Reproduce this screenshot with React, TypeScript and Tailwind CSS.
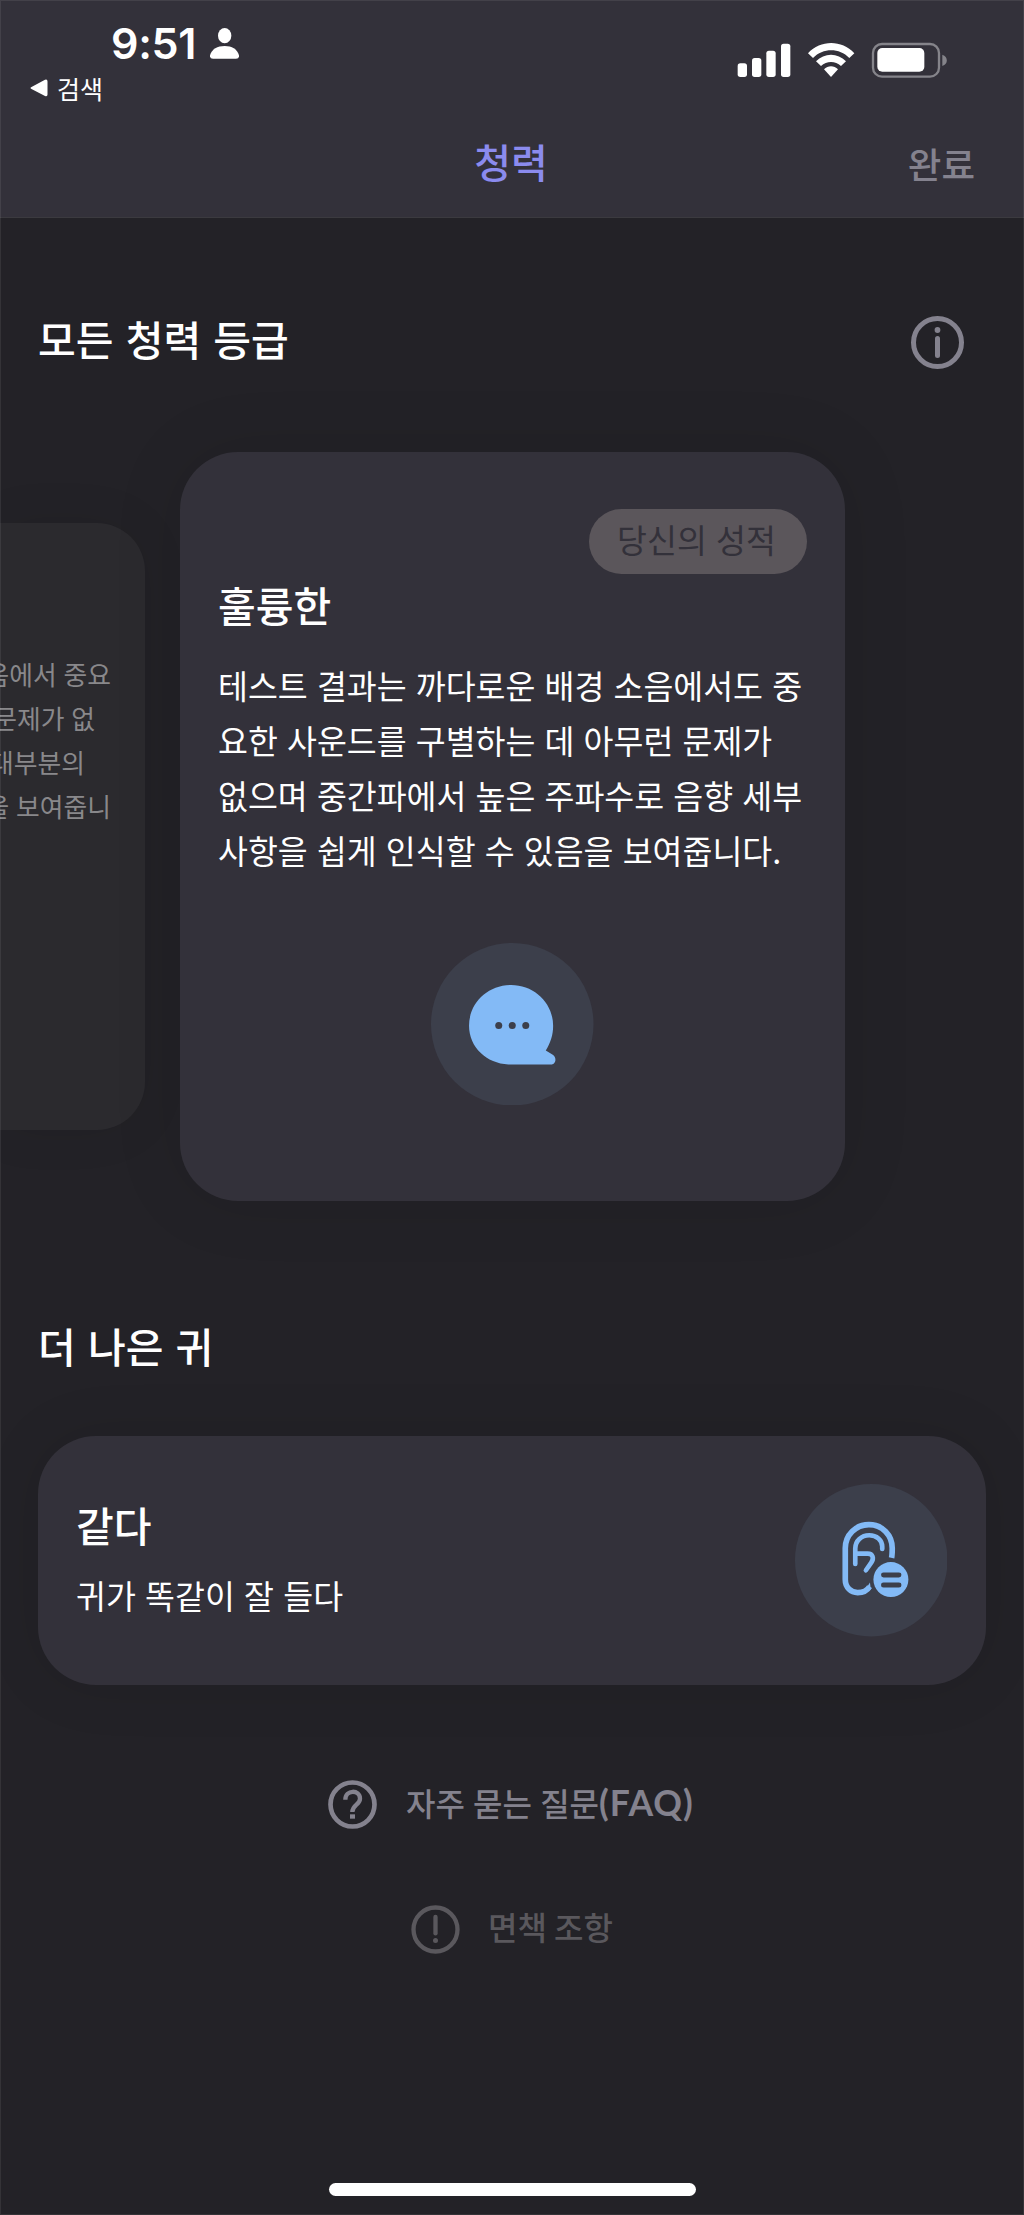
import React from "react";

function StatusIcons() {
  return (
    <svg className="h-[36px] w-[212px]" viewBox="674 126 636 108" fill="#fff">
      <rect x="676" y="190" width="28" height="41" rx="8" />
      <rect x="719" y="174" width="28" height="57" rx="8" />
      <rect x="762" y="152" width="28" height="79" rx="8" />
      <rect x="806" y="131" width="28" height="100" rx="8" />
      <path d="M887 160 C925 119 988 119 1026 160 L1011 174 C981 143 932 143 902 174 Z" />
      <path d="M911 184 C936 158 976 158 1001 184 L986 198 C969 182 943 182 926 198 Z" />
      <path d="M935 208 C947 196 965 196 977 208 L956 231 Z" />
      <rect x="1082" y="132" width="198" height="98" rx="27" fill="none" stroke="#85848a" strokeWidth="7" />
      <rect x="1095" y="144" width="141" height="71" rx="15" />
      <path d="M1290 164 C1308 170 1308 192 1290 198 Z" fill="#85848a" />
    </svg>
  );
}

function ChatIcon() {
  return (
    <svg className="size-[162.5px] shrink-0" viewBox="93 127 487 487">
      <circle cx="336.5" cy="370.5" r="243.5" fill="#3c3f4b" />
      <path
        d="M333 253 C403 253 459 307 459 375 C459 403 451 427 437 449 L458 462 C471 471 467 491 453 491 H325 C260 488 207 440 207 375 C207 308 262 253 333 253Z"
        fill="#83baf6"
      />
      <g fill="#3c3f4b">
        <circle cx="296" cy="374" r="10.5" />
        <circle cx="336.500" cy="374" r="10.5" />
        <circle cx="377" cy="374" r="10.5" />
      </g>
    </svg>
  );
}

function EarIcon() {
  return (
    <svg className="size-[152.5px] shrink-0" viewBox="44 42 458 458" fill="none">
      <circle cx="273" cy="271" r="229" fill="#3c3f4b" />
      <g stroke="#83baf6">
        <path
          d="M334 264 C336 255 336 245 336 235 C336 195 306 164 266 164 C226 164 195 195 195 235 V329 C195 353 212 368 232 368 C248 368 261 362 268 350"
          strokeWidth="17"
        />
        <path
          d="M306 237 V230 C306 210 289 196 267 196 C244 196 225 212 225 236 V282 M225 251 H262 C278 251 282 265 273 278 L257 301"
          strokeWidth="14"
          strokeLinecap="round"
          strokeLinejoin="round"
        />
      </g>
      <path d="M269 338 L272 360 L260 352 Z" fill="#83baf6" />
      <circle cx="332" cy="329" r="52.500" fill="#83baf6" />
      <path d="M310 315 H356 M310 345 H356" stroke="#3c3f4b" strokeWidth="15" strokeLinecap="round" />
    </svg>
  );
}

function InfoIcon() {
  return (
    <svg className="size-[53px]" viewBox="0 0 53 53" fill="#84828e">
      <circle cx="26.500" cy="26.500" r="24" fill="none" stroke="#84828e" strokeWidth="5" />
      <circle cx="26.500" cy="14" r="2.900" />
      <rect x="24" y="20" width="5" height="22" rx="2.500" />
    </svg>
  );
}

function QuestionIcon() {
  return (
    <svg className="size-[49px]" viewBox="84 90 147 147" fill="none" stroke="#84828e">
      <circle cx="157.500" cy="163.500" r="66" strokeWidth="14" />
      <path d="M136 149 C136 118 180 118 180 146 C180 164 157 164 157 186" strokeWidth="13" />
      <rect x="150" y="193" width="15" height="13" fill="#84828e" stroke="none" />
    </svg>
  );
}

function AlertIcon() {
  return (
    <svg className="size-[49px]" viewBox="333 463 147 147" fill="none" stroke="#5a585d">
      <circle cx="406.500" cy="536.500" r="66" strokeWidth="13" />
      <path d="M406.500 499 V548" strokeWidth="13" strokeLinecap="round" />
      <circle cx="406.500" cy="569.500" r="7.500" fill="#5a585d" stroke="none" />
    </svg>
  );
}

const resultLines = [
  "테스트 결과는 까다로운 배경 소음에서도 중",
  "요한 사운드를 구별하는 데 아무런 문제가",
  "없으며 중간파에서 높은 주파수로 음향 세부",
  "사항을 쉽게 인식할 수 있음을 보여줍니다.",
];

export default function App() {
  return (
    <div className="relative flex h-[2215px] w-[1024px] flex-col overflow-hidden bg-[#232227] font-['Noto_Sans_CJK_KR',sans-serif] text-white">
      <header className="h-[218px] shrink-0 border-b border-[#3b3a3f] bg-[#33313a]">
        <div className="flex h-[114px] items-start justify-between pr-[75px] pl-[30px]">
          <div>
            <div className="flex h-[66px] items-start gap-[14px] pt-[18px] pl-[81px]">
              <span className="w-[85px] font-['Inter',sans-serif] text-[43px] leading-[50px] font-semibold tracking-[-0.3px] whitespace-nowrap">9:51</span>
              <svg className="mt-[10px] h-[31px] w-[29px]" viewBox="630 83 87 93" fill="#fff">
                <ellipse cx="674" cy="106" rx="20" ry="23" />
                <path d="M630 165 C636 146 652 137 674 137 C696 137 711 146 717 165 Q718 175 708 175 H639 Q629 175 630 165 Z" />
              </svg>
            </div>
            <div className="flex h-[44px] items-center gap-[9px]">
              <svg className="h-[18px] w-[18px]" viewBox="0 0 18 18" fill="#fff">
                <path d="M1.500 8 L15 0.800 Q17.500 0 17.500 2.500 V15.500 Q17.500 18 15 17 L1.500 10 Q-0.500 9 1.500 8 Z" />
              </svg>
              <span className="text-[25px] leading-[36px]">검색</span>
            </div>
          </div>
          <div className="pt-[42px]">
            <StatusIcons />
          </div>
        </div>
        <div className="grid h-[98px] grid-cols-3 items-center px-[48px]">
          <h1 className="col-start-2 pr-[2px] pb-[4px] text-center text-[40px] leading-[60px] font-medium text-[#8b8bee]">청력</h1>
          <button className="pt-[1px] pr-[1px] text-right text-[36.500px] leading-[54px] font-medium text-[#84828e]">완료</button>
        </div>
      </header>

      <section className="flex h-[234px] shrink-0 items-start justify-between pr-[60px] pl-[38px]">
        <h2 className="mt-[94px] text-[41px] leading-[52px] font-medium whitespace-nowrap [word-spacing:3px]">모든 청력 등급</h2>
        <div className="mt-[97.500px]">
          <InfoIcon />
        </div>
      </section>

      <section className="flex h-[749px] shrink-0 items-center gap-[35px]">
        <div className="h-[607px] w-[145px] shrink-0 overflow-hidden rounded-r-[48px] bg-[#2b2a2e] pt-[129px] shadow-[0_0_50px_rgba(0,0,0,0.08)]">
          <div className="text-[25.800px] leading-[44px] whitespace-nowrap text-[#89888b] [word-spacing:1px]">
            <div className="flex justify-end pr-[34px]">음에서 중요</div>
            <div className="flex justify-end pr-[50px]">문제가 없</div>
            <div className="flex justify-end pr-[60px]">대부분의</div>
            <div className="flex justify-end pr-[34px]">을 보여줍니</div>
          </div>
        </div>
        <div className="flex h-[749px] w-[665px] shrink-0 flex-col rounded-[58px] bg-[#33313a] px-[38px] pt-[57px] shadow-[0_0_70px_rgba(0,0,0,0.1)]">
          <div className="flex h-[65px] w-[218px] items-center justify-center self-end rounded-full bg-[#5b565b] pr-[3px] pb-[5px] text-[32.500px] leading-[48px] whitespace-nowrap text-[#33313a] [word-spacing:2px]">
            당신의 성적
          </div>
          <h3 className="text-[41px] leading-[60px] font-medium">훌륭한</h3>
          <p className="mt-[24px] text-[32.500px] leading-[54.900px] whitespace-nowrap [word-spacing:1.9px]">
            {resultLines.map((line) => (
              <span key={line} className="block">{line}</span>
            ))}
          </p>
          <div className="mt-[65px] flex justify-center">
            <ChatIcon />
          </div>
        </div>
      </section>

      <h2 className="mt-[114px] h-[60px] shrink-0 pl-[38px] text-[41px] leading-[60px] font-medium [word-spacing:3px]">더 나은 귀</h2>

      <section className="mx-[38px] mt-[61px] flex h-[249px] shrink-0 items-center justify-between rounded-[58px] bg-[#33313a] pr-[39px] pl-[38px] shadow-[0_0_60px_rgba(0,0,0,0.1)]">
        <div className="pb-[6px]">
          <h3 className="text-[41px] leading-[60px] font-medium">같다</h3>
          <p className="mt-[14px] text-[32.500px] leading-[54px] [word-spacing:2px]">귀가 똑같이 잘 들다</p>
        </div>
        <EarIcon />
      </section>

      <div className="mt-[95px] flex h-[49px] shrink-0 items-center pl-[328px] text-[#84828e]">
        <QuestionIcon />
        <span className="ml-[29px] pb-[5px] text-[32px] leading-[48px] font-medium whitespace-nowrap [word-spacing:1px]">
          자주 묻는 질문<span className="font-['Lato',sans-serif] text-[35.500px] font-bold tracking-[0.9px]">(FAQ)</span>
        </span>
      </div>
      <div className="mt-[76px] flex h-[49px] shrink-0 items-center pl-[411px] text-[#5a585d]">
        <AlertIcon />
        <span className="ml-[28px] pb-[7px] text-[32px] leading-[48px] font-medium whitespace-nowrap">면책 조항</span>
      </div>

      <div className="mt-auto mb-[19px] h-[13px] w-[367px] shrink-0 self-center rounded-full bg-white" />
      <div className="pointer-events-none absolute inset-0 border border-white/8" />
    </div>
  );
}
